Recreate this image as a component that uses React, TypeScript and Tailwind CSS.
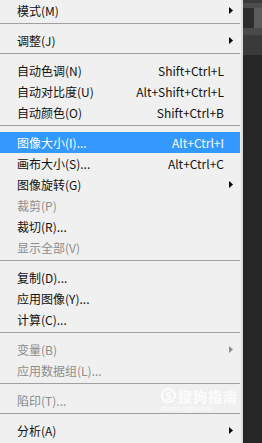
type Item =
  | { sep: true }
  | { sep?: false; label: string; shortcut?: string; sub?: boolean; disabled?: boolean; active?: boolean };

const items: Item[] = [
  { label: '模式(M)', sub: true },
  { sep: true },
  { label: '调整(J)', sub: true },
  { sep: true },
  { label: '自动色调(N)', shortcut: 'Shift+Ctrl+L' },
  { label: '自动对比度(U)', shortcut: 'Alt+Shift+Ctrl+L' },
  { label: '自动颜色(O)', shortcut: 'Shift+Ctrl+B' },
  { sep: true },
  { label: '图像大小(I)...', shortcut: 'Alt+Ctrl+I', active: true },
  { label: '画布大小(S)...', shortcut: 'Alt+Ctrl+C' },
  { label: '图像旋转(G)', sub: true },
  { label: '裁剪(P)', disabled: true },
  { label: '裁切(R)...' },
  { label: '显示全部(V)', disabled: true },
  { sep: true },
  { label: '复制(D)...' },
  { label: '应用图像(Y)...' },
  { label: '计算(C)...' },
  { sep: true },
  { label: '变量(B)', sub: true, disabled: true },
  { label: '应用数据组(L)...', disabled: true },
  { sep: true },
  { label: '陷印(T)...', disabled: true },
  { sep: true },
  { label: '分析(A)', sub: true },
];

const Arrow = ({ color }: { color: string }) => (
  <svg width="4" height="7" viewBox="0 0 4 7" className="mr-[7px]">
    <path d="M0 0L4 3.5L0 7Z" fill={color} />
  </svg>
);

export default function App() {
  return (
    <div
      className="flex w-[262px] h-[443px] overflow-hidden bg-[#262626]"
      style={{ fontFamily: '"Microsoft YaHei", "Noto Sans CJK SC", sans-serif' }}
    >
      {/* Menu */}
      <div className="relative w-[243px] h-full bg-[#f0f0f0] border-r-2 border-[#dcdcdc] text-[12px]">
        {items.map((item, i) =>
          item.sep ? (
            <div key={i} className="h-[9px] pt-[2px] pr-[1px]">
              <div className="h-px bg-[#a0a0a0]" />
            </div>
          ) : (
            <div
              key={i}
              className={`flex items-center h-[21px] pl-[17px] mr-[1px] ${
                item.active ? 'bg-[#3399ff] text-white' : item.disabled ? 'text-[#8d8d8d]' : 'text-[#111]'
              }`}
            >
              <span className="flex-1 leading-none">{item.label}</span>
              {item.shortcut && <span className="mr-[16px] leading-none">{item.shortcut}</span>}
              {item.sub && <Arrow color={item.disabled ? '#8d8d8d' : '#000'} />}
            </div>
          )
        )}

        {/* watermark */}
        <div className="absolute left-[161px] top-[388px] flex flex-col items-start text-white/80 pointer-events-none">
          <div className="flex items-center gap-[2px]">
            <div className="w-[15px] h-[15px] rounded-full border-2 border-white/80 flex items-center justify-center text-[10px] font-bold leading-none">
              S
            </div>
            <span className="text-[14px] font-bold leading-none tracking-[1px]">搜狗指南</span>
          </div>
          <span className="text-[6px] leading-none mt-[3px]">zhinan.sogou.com</span>
        </div>
      </div>

      {/* dark side panel */}
      <div className="flex-1 flex flex-col">
        <div className="h-[3px] bg-[#3a3a3a]" />
        <div className="h-[5px] bg-[#4d4d4d]" />
        <div className="h-[20px] flex bg-[#343434]">
          <div className="w-[11px] bg-[#2d2d2d]" />
          <div className="flex-1 bg-[#5c5c5c]" />
        </div>
        <div className="h-[7px] bg-[#4a4a4a]" />
        <div className="h-[20px] bg-[#3a3a3a]" />
        <div className="flex-1 bg-[#262626]" />
      </div>
    </div>
  );
}
